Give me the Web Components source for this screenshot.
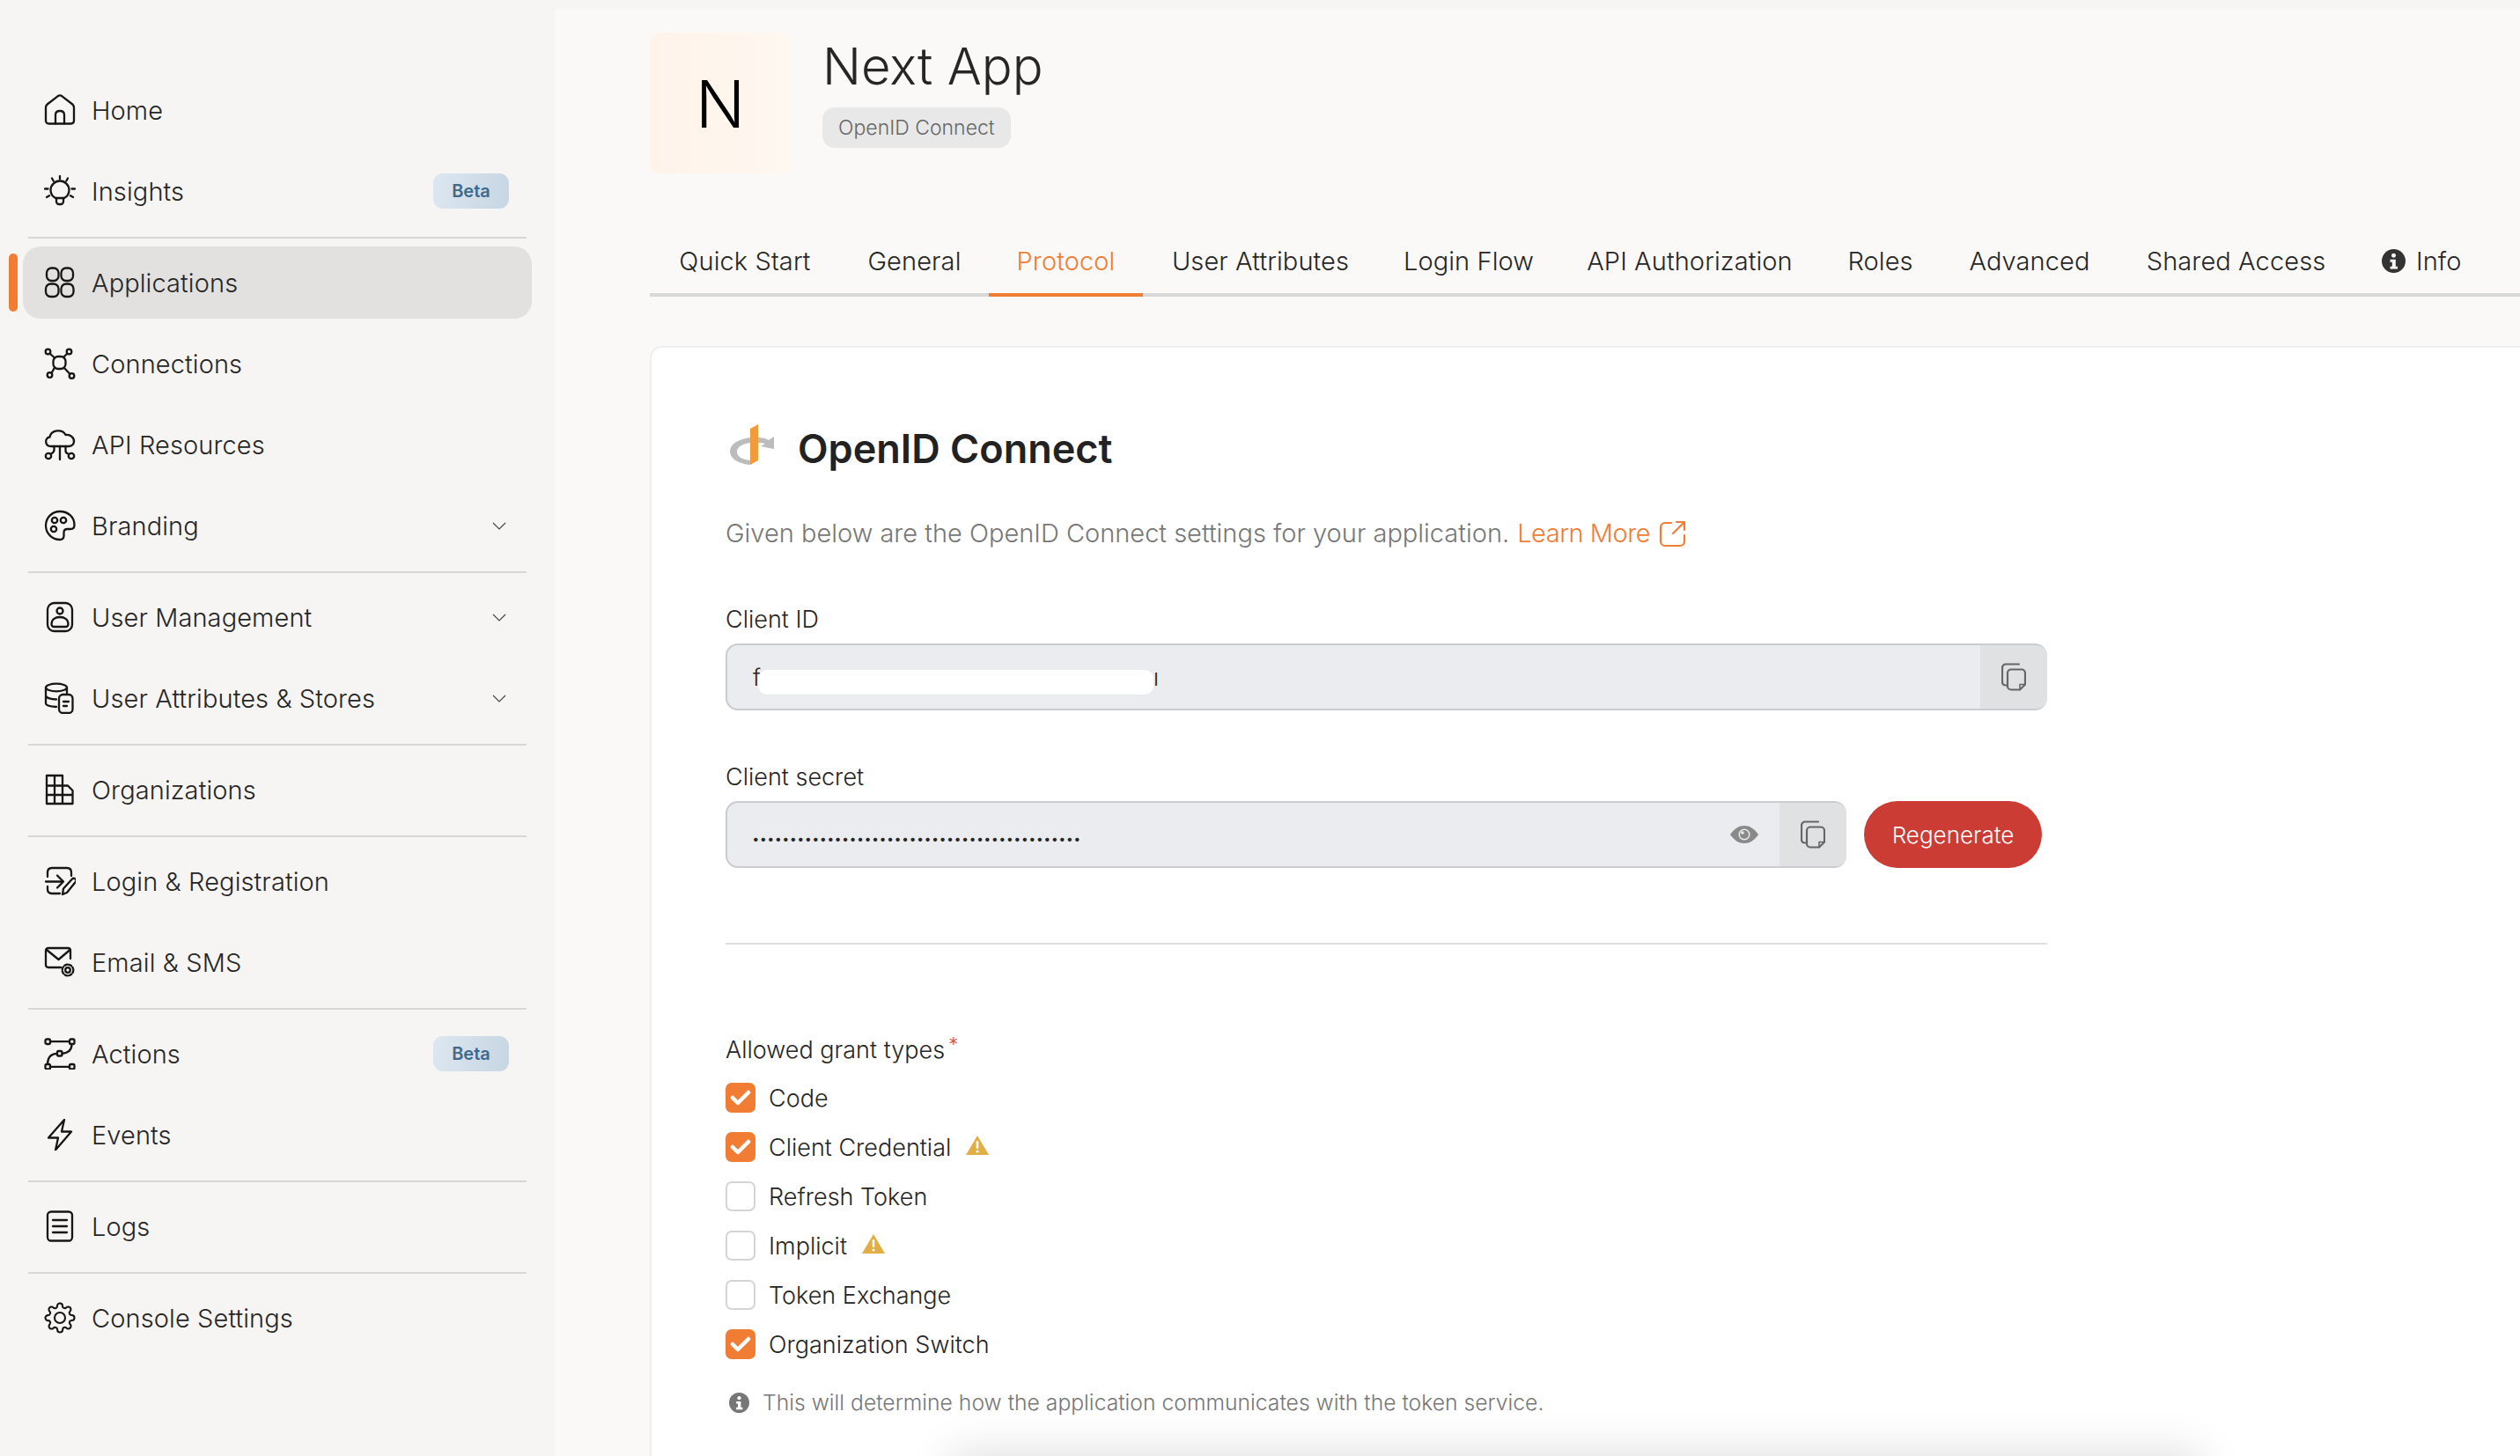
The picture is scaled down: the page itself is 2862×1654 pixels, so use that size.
<!DOCTYPE html>
<html lang="en">
<head>
<meta charset="utf-8">
<title>Next App - Protocol</title>
<style>
  html, body { margin: 0; height: 100%; overflow: hidden; }
  body {
    width: 2862px;
    height: 1654px;
    background: #f6f5f3;
    font-family: Inter, "Noto Sans", sans-serif;
    font-weight: 300;
    color: #262626;
    display: flex;
  }
</style>
</head>
<body>
  <app-sidebar>
    <nav-item icon="home">Home</nav-item>
    <nav-item icon="insights" badge="Beta">Insights</nav-item>
    <nav-rule></nav-rule>
    <nav-item icon="apps" active>Applications</nav-item>
    <nav-item icon="connections">Connections</nav-item>
    <nav-item icon="api">API Resources</nav-item>
    <nav-item icon="branding" chevron>Branding</nav-item>
    <nav-rule></nav-rule>
    <nav-item icon="users" chevron>User Management</nav-item>
    <nav-item icon="stores" chevron>User Attributes &amp; Stores</nav-item>
    <nav-rule></nav-rule>
    <nav-item icon="orgs">Organizations</nav-item>
    <nav-rule></nav-rule>
    <nav-item icon="login">Login &amp; Registration</nav-item>
    <nav-item icon="email">Email &amp; SMS</nav-item>
    <nav-rule></nav-rule>
    <nav-item icon="actions" badge="Beta">Actions</nav-item>
    <nav-item icon="events">Events</nav-item>
    <nav-rule></nav-rule>
    <nav-item icon="logs">Logs</nav-item>
    <nav-rule></nav-rule>
    <nav-item icon="settings">Console Settings</nav-item>
  </app-sidebar>

  <app-main>
    <app-header name="Next App" initial="N" kind="OpenID Connect"></app-header>
    <tab-bar>
      <tab-item width="216">Quick Start</tab-item>
      <tab-item width="169">General</tab-item>
      <tab-item width="175" active>Protocol</tab-item>
      <tab-item width="267">User Attributes</tab-item>
      <tab-item width="206">Login Flow</tab-item>
      <tab-item width="296">API Authorization</tab-item>
      <tab-item width="137">Roles</tab-item>
      <tab-item width="202">Advanced</tab-item>
      <tab-item width="267">Shared Access</tab-item>
      <tab-item info>Info</tab-item>
    </tab-bar>
    <protocol-card>
      <copy-field label="Client ID" redacted></copy-field>
      <copy-field label="Client secret" secret></copy-field>
      <grant-types></grant-types>
    </protocol-card>
  </app-main>
  <scroll-fade></scroll-fade>

<script>
// stroke icons, all drawn in a 36 box
const ICONS = {
  home: `<path d="M2 15c0-1.500.6-2.600 1.700-3.500L15.500 2.300c1.500-1.100 3.500-1.100 5 0l11.800 9.200c1.100.9 1.700 2 1.700 3.500v15c0 2-1.200 3.500-3.500 3.500h-25C3.200 33.500 2 32 2 30z"/><path d="M13 33.500V23.500c0-2.800 2-4.500 5-4.500s5 1.700 5 4.500v10"/>`,
  insights: `<path d="M13 26c-3.500-2-5.500-5-5.500-9a10.500 10.500 0 0 1 21 0c0 4-2 7-5.500 9z"/><path d="M14 26v4a3 3 0 0 0 3 3h2a3 3 0 0 0 3-3v-4"/><path d="M18 1v3.500M9 3.500l1.700 3M27 3.500l-1.700 3M1 15.500h3.500M31.500 15.500H35M3 25l3-1.700M33 25l-3-1.700"/>`,
  apps: `<rect x="3" y="1.500" width="13.500" height="14.500" rx="5.500"/><rect x="19.500" y="1.500" width="13.500" height="14.500" rx="5.500"/><rect x="2" y="19.500" width="14.500" height="14.500" rx="5.500"/><rect x="19.500" y="19.500" width="14" height="14.500" rx="5.500"/>`,
  connections: `<circle cx="4.500" cy="4.500" r="2.800"/><circle cx="28.500" cy="4.500" r="2.800"/><circle cx="6.500" cy="31" r="2.800"/><circle cx="31.500" cy="32" r="2.800"/><rect x="10.500" y="10" width="14" height="14" rx="5.500"/><path d="M6.500 6.500l5.500 5M26.500 6.500l-4 4M8.500 29l3.500-6.500M29.500 30l-6.500-7"/>`,
  api: `<path d="M8 20c-7 0-8-9.500-1.500-10.500C8 1 21 0 24.500 7c6-.5 10 3.500 9.500 8-.4 3-3 5-6 5z"/><path d="M18 20v15M11.500 20v4c0 2.500-1.500 3.500-3.500 4.500M24.500 20v5c0 2 1 3 3 3.500"/><circle cx="5" cy="31" r="3.200"/><circle cx="31" cy="31" r="3.200"/>`,
  branding: `<path d="M18 2a16 16 0 1 0 0 32c3 0 4.500-2 4.500-4.500v-3.500c0-2.500 1.500-4 4-4h3.500c2.700 0 4.500-1.800 4.500-4.500C34.500 8 27 2 18 2z"/><circle cx="12" cy="12" r="3.200"/><circle cx="22" cy="12" r="3.200"/><circle cx="11" cy="22" r="3.200"/>`,
  users: `<rect x="4" y="2" width="28" height="32" rx="7.500"/><circle cx="18" cy="11" r="3.500"/><path d="M8.500 26c0-5 4-8 9.500-8s9.500 3 9.500 8c0 2-1.500 3-3 3H11.500c-1.500 0-3-1-3-3z"/>`,
  stores: `<ellipse cx="14" cy="6" rx="12" ry="4.300"/><path d="M2 6v18c0 2 2.500 3.500 12 4M2 15c0 2.500 5 4.500 12 4.500M26 6v6"/><rect x="17" y="14" width="15.500" height="21" rx="4.500"/><path d="M22 22h6M22 27h4"/>`,
  orgs: `<path d="M3 2h18v11.500h6l5.500 5.500v15H3zM3 13.500h18M3 24h29.500M12 2v32M21 13.500V34"/>`,
  login: `<path d="M4 13V8c0-3 2-5 5-5h17c3 0 5 2 5 5v4M4 24v3c0 3 2 5 5 5h9"/><path d="M2 18.500h20M15 11.500l7 7-7 7"/><path d="M21 33l1-6.500 10-11c1-1 2.600-1 3.500 0s1 2.700 0 3.700L26 31z"/>`,
  email: `<path d="M19 24H5c-2 0-3-1-3-3V5c0-2 1-3 3-3h22c2 0 3 1 3 3v9"/><path d="M3 4l13.500 11L29.500 4"/><circle cx="27" cy="27" r="2.800"/><circle cx="27" cy="27" r="6.300" stroke-dasharray="3 2"/>`,
  actions: `<rect x="1.500" y="1.500" width="5.500" height="5.500" rx="1.500"/><rect x="29" y="1.500" width="5.500" height="5.500" rx="1.500"/><rect x="15" y="15" width="5.500" height="5.500" rx="1.500"/><rect x="1.500" y="30" width="5.500" height="5.500" rx="1.500"/><rect x="29" y="30" width="5.500" height="5.500" rx="1.500"/><path d="M7 4.200h22M7 32.800h22M31.500 7c0 6-2.500 10-11 10.800M15 17.800C8 18 4 22 4 30"/>`,
  events: `<path d="M23 1L5 21.500h11L13 35.500l18-21H20z"/>`,
  logs: `<rect x="4" y="1.500" width="28" height="33" rx="4"/><path d="M10 11h16M10 18h16M10 25h16"/>`,
  settings: `<g transform="scale(1.500)" stroke-width="1.400"><circle cx="12" cy="12" r="4"/><path d="M19.400 15a1.650 1.650 0 0 0 .33 1.820l.06.06a2 2 0 0 1 0 2.830 2 2 0 0 1-2.830 0l-.06-.06a1.650 1.650 0 0 0-1.820-.33 1.650 1.650 0 0 0-1 1.510V21a2 2 0 0 1-2 2 2 2 0 0 1-2-2v-.09A1.650 1.650 0 0 0 9 19.400a1.650 1.650 0 0 0-1.820.33l-.06.06a2 2 0 0 1-2.830 0 2 2 0 0 1 0-2.830l.06-.06a1.650 1.650 0 0 0 .33-1.820 1.650 1.650 0 0 0-1.510-1H3a2 2 0 0 1-2-2 2 2 0 0 1 2-2h.09A1.650 1.650 0 0 0 4.600 9a1.650 1.650 0 0 0-.33-1.820l-.06-.06a2 2 0 0 1 0-2.830 2 2 0 0 1 2.830 0l.06.06a1.650 1.650 0 0 0 1.820.33H9a1.650 1.650 0 0 0 1-1.510V3a2 2 0 0 1 2-2 2 2 0 0 1 2 2v.09a1.650 1.650 0 0 0 1 1.510 1.650 1.650 0 0 0 1.820-.33l.06-.06a2 2 0 0 1 2.830 0 2 2 0 0 1 0 2.830l-.06.06a1.650 1.650 0 0 0-.33 1.820V9a1.650 1.650 0 0 0 1.510 1H21a2 2 0 0 1 2 2 2 2 0 0 1-2 2h-.09a1.650 1.650 0 0 0-1.510 1z"/></g>`,
};

const svgIcon = (name, size = 36) =>
  `<svg width="${size}" height="${size}" viewBox="0 0 36 36" fill="none" stroke="currentColor" stroke-width="2.300" stroke-linecap="round" stroke-linejoin="round">${ICONS[name]}</svg>`;

const INFO_ICON = (size, color) =>
  `<svg width="${size}" height="${size}" viewBox="0 0 24 24"><circle cx="12" cy="12" r="12" fill="${color}"/><circle cx="12" cy="6.500" r="2.200" fill="#fff"/><path d="M8.500 10.500h5.500v7h2v2.500H8.500v-2.500h2v-4.500h-2z" fill="#fff"/></svg>`;

const COPY_ICON = `<svg width="28" height="32" viewBox="0 0 28 32" fill="none" stroke="#666" stroke-width="2.200" stroke-linejoin="round" stroke-linecap="round"><path d="M20 1.500H5a4 4 0 0 0-4 4v17a4 4 0 0 0 4 3h2"/><path d="M11 7.500h12a4 4 0 0 1 4 4v13l-6 6h-10a4 4 0 0 1-4-4v-15a4 4 0 0 1 4-4z"/><path d="M27 24.500h-6v6" stroke-width="1.600"/></svg>`;

const WARN_ICON = `<svg width="26" height="22" viewBox="0 0 26 22"><path d="M13 0L26 22H0z" fill="#e2ad42"/><rect x="11.700" y="6" width="2.600" height="9" rx="1.200" fill="#fff"/><circle cx="13" cy="18" r="1.600" fill="#fff"/></svg>`;

class AppSidebar extends HTMLElement {
  connectedCallback() {
    this.attachShadow({ mode: "open" });
    this.shadowRoot.innerHTML = `
      <style>
        :host {
          display: flex;
          flex-direction: column;
          box-sizing: border-box;
          width: 630px;
          flex: none;
          height: 1654px;
          padding: 84px 26px 0;
          font-size: 29px;
          letter-spacing: 0.1px;
        }
      </style>
      <slot></slot>
    `;
  }
}

class NavItem extends HTMLElement {
  connectedCallback() {
    const active = this.hasAttribute("active");
    const badge = this.getAttribute("badge");
    const chevron = this.hasAttribute("chevron");
    this.attachShadow({ mode: "open" });
    this.shadowRoot.innerHTML = `
      <style>
        :host {
          display: flex;
          align-items: center;
          position: relative;
          height: 82px;
          flex: none;
          margin-bottom: 10px;
          padding: 0 26px 0 24px;
          border-radius: 20px;
          color: #262626;
          background: ${active ? "#e2e1df" : "transparent"};
        }
        .icon { display: flex; color: #161616; margin-right: 18px; }
        .label { flex: 1; white-space: nowrap; }
        .badge {
          display: flex;
          align-items: center;
          justify-content: center;
          width: 86px;
          height: 40px;
          border-radius: 11px;
          background: linear-gradient(100deg, #dde7f0, #c6d6e3);
          color: #3e6a8e;
          font-size: 20px;
          font-weight: 600;
          letter-spacing: 0;
        }
        .chevron { display: flex; margin-right: 3px; }
        .marker {
          position: absolute;
          left: -16px;
          top: 8px;
          width: 10px;
          height: 66px;
          border-radius: 5px;
          background: #f17c33;
        }
      </style>
      ${active ? '<span class="marker"></span>' : ""}
      <span class="icon">${svgIcon(this.getAttribute("icon"))}</span>
      <span class="label"><slot></slot></span>
      ${badge ? `<span class="badge">${badge}</span>` : ""}
      ${chevron ? `<span class="chevron"><svg width="16" height="9" viewBox="0 0 16 9" fill="none" stroke="#444" stroke-width="1.200"><path d="M1 1l7 7 7-7"/></svg></span>` : ""}
    `;
  }
}

class NavRule extends HTMLElement {
  connectedCallback() {
    this.attachShadow({ mode: "open" });
    this.shadowRoot.innerHTML = `
      <style>
        :host {
          display: block;
          flex: none;
          height: 2px;
          margin: 1px 6px 9px;
          background: #d8d7d5;
        }
      </style>
    `;
  }
}

class AppMain extends HTMLElement {
  connectedCallback() {
    this.attachShadow({ mode: "open" });
    this.shadowRoot.innerHTML = `
      <style>
        :host {
          display: flex;
          flex-direction: column;
          flex: 1;
          box-sizing: border-box;
          height: 1644px;
          margin-top: 10px;
          padding: 27px 0 0 108px;
          background: #faf9f7;
          min-width: 0;
        }
      </style>
      <slot></slot>
    `;
  }
}

class AppHeader extends HTMLElement {
  connectedCallback() {
    this.attachShadow({ mode: "open" });
    this.shadowRoot.innerHTML = `
      <style>
        :host { display: flex; gap: 36px; height: 160px; flex: none; }
        .logo {
          display: flex;
          align-items: center;
          justify-content: center;
          box-sizing: border-box;
          width: 160px;
          height: 160px;
          padding-top: 2px;
          border-radius: 10px;
          background: linear-gradient(90deg, #fff3ea, #fef8f0);
          color: #000;
          font-size: 74px;
          font-weight: 300;
        }
        .name {
          font-size: 58px;
          line-height: 76px;
          color: #262626;
        }
        .kind {
          display: inline-block;
          margin-top: 9px;
          height: 46px;
          line-height: 46px;
          padding: 0 18px;
          border-radius: 14px;
          background: #e8e8e8;
          color: #666;
          font-size: 23px;
        }
      </style>
      <div class="logo">${this.getAttribute("initial")}</div>
      <div>
        <div class="name">${this.getAttribute("name")}</div>
        <div class="kind">${this.getAttribute("kind")}</div>
      </div>
    `;
  }
}

class TabBar extends HTMLElement {
  connectedCallback() {
    this.attachShadow({ mode: "open" });
    this.shadowRoot.innerHTML = `
      <style>
        :host {
          display: flex;
          flex: none;
          margin-top: 69px;
          height: 67px;
          border-bottom: 4px solid #d8d8d8;
          font-size: 29px;
          letter-spacing: 0.1px;
        }
      </style>
      <slot></slot>
    `;
  }
}

class TabItem extends HTMLElement {
  connectedCallback() {
    const active = this.hasAttribute("active");
    const width = this.getAttribute("width");
    this.attachShadow({ mode: "open" });
    this.shadowRoot.innerHTML = `
      <style>
        :host {
          display: flex;
          align-items: center;
          justify-content: center;
          gap: 12px;
          box-sizing: border-box;
          flex: none;
          height: 71px;
          ${width ? `width: ${width}px;` : "padding: 0 32px;"}
          padding-bottom: 7px;
          white-space: nowrap;
          color: ${active ? "#f17c33" : "#262626"};
          border-bottom: 4px solid ${active ? "#f17c33" : "transparent"};
        }
      </style>
      ${this.hasAttribute("info") ? INFO_ICON(27, "#333") : ""}
      <slot></slot>
    `;
  }
}

class ProtocolCard extends HTMLElement {
  connectedCallback() {
    this.attachShadow({ mode: "open" });
    this.shadowRoot.innerHTML = `
      <style>
        :host {
          display: block;
          flex: 1;
          box-sizing: border-box;
          margin-top: 56px;
          padding: 87px 0 0 84px;
          background: #fff;
          border: 2px solid #eeeff1;
          border-right: 0;
          border-bottom: 0;
          border-radius: 14px 0 0 0;
          overflow: hidden;
        }
        .title { display: flex; gap: 26px; height: 56px; padding-left: 5px; }
        .title svg { flex: none; }
        h2 {
          margin: 0;
          font-size: 45px;
          line-height: 56px;
          font-weight: 600;
          color: #222;
        }
        p {
          margin: 48px 0 0;
          font-size: 29px;
          line-height: 40px;
          color: #777;
          display: flex;
          align-items: center;
          white-space: nowrap;
        }
        a {
          color: #f17c33;
          text-decoration: none;
          display: inline-flex;
          align-items: center;
          gap: 10px;
          margin-left: 9px;
          letter-spacing: -0.45px;
        }
      </style>
      <div class="title">
        <svg width="51" height="46" viewBox="0 0 51 46">
          <path d="M23 15C10 17 0 22 0 31C0 39 10 45 23 46V41C14 40 8 37 8 31C8 26 14 22 23 21z" fill="#bcbcbc"/>
          <path d="M32 15C37 15 41 16 44 18L50 14V28L35 25L40 22C37 21 35 21 32 21z" fill="#bcbcbc"/>
          <path d="M23 5L32 0V41L23 46z" fill="#f29a3c"/>
        </svg>
        <h2>OpenID Connect</h2>
      </div>
      <p>Given below are the OpenID Connect settings for your application.
        <a>Learn More
          <svg width="31" height="31" viewBox="0 0 31 31" fill="none" stroke="#f17c33" stroke-width="2.200" stroke-linecap="round" stroke-linejoin="round"><path d="M14 3H7a5 5 0 0 0-5 5v16a5 5 0 0 0 5 5h17a5 5 0 0 0 5-5v-7"/><path d="M16 15L29 2M20 2h9v9"/></svg>
        </a>
      </p>
      <slot></slot>
    `;
  }
}

class CopyField extends HTMLElement {
  connectedCallback() {
    const secret = this.hasAttribute("secret");
    this.attachShadow({ mode: "open" });
    this.shadowRoot.innerHTML = `
      <style>
        :host { display: block; width: 1501px; margin-top: 60px; }
        :host([secret]) { margin-top: 58px; }
        label { display: block; font-size: 27px; line-height: 36px; color: #262626; }
        .row { display: flex; gap: 20px; margin-top: 9px; }
        .box {
          flex: 1;
          display: flex;
          height: 76px;
          box-sizing: border-box;
          border-radius: 14px;
          overflow: hidden;
          border: 2px solid #cbccd0;
          border-right: 0;
          background: #ebecf0;
        }
        .value {
          flex: 1;
          display: flex;
          align-items: center;
          padding-left: 29px;
          font-size: 26px;
          color: #262626;
          min-width: 0;
        }
        .first { width: 6px; }
        .redact {
          display: block;
          width: 449px;
          height: 28px;
          margin: 12px 0 0;
          background: #fff;
          border-radius: 10px;
        }
        .dots { font-size: 14px; letter-spacing: 1.85px; font-weight: 700; margin-top: 8px; }
        .eye { display: flex; margin-right: 24px; align-self: center; }
        .copy {
          display: flex;
          align-items: center;
          justify-content: center;
          width: 76px;
          margin: -2px 0;
          background: #e0e1e3;
        }
        button {
          flex: none;
          width: 202px;
          height: 76px;
          margin-right: 6px;
          border: 0;
          border-radius: 38px;
          background: #cb3c34;
          color: #fff;
          font: inherit;
          font-size: 26px;
          padding-top: 2px;
        }
      </style>
      <label>${this.getAttribute("label")}</label>
      <div class="row">
        <div class="box">
          <div class="value">
            ${secret
              ? `<span class="dots">${"•".repeat(44)}</span>`
              : `<span class="first">f</span><span class="redact"></span><span>ı</span>`}
          </div>
          ${secret ? `<span class="eye"><svg width="32" height="20" viewBox="0 0 32 20"><path d="M0 10C5 3 10 0 16 0s11 3 16 10c-5 7-10 10-16 10S5 17 0 10z" fill="#8a8a8a"/><circle cx="16" cy="10" r="6.500" fill="#ebecf0"/><circle cx="16" cy="10" r="5" fill="#8a8a8a"/><circle cx="14" cy="8" r="1.800" fill="#ebecf0"/></svg></span>` : ""}
          <div class="copy">${COPY_ICON}</div>
        </div>
        ${secret ? "<button>Regenerate</button>" : ""}
      </div>
    `;
  }
}

class GrantTypes extends HTMLElement {
  connectedCallback() {
    this.attachShadow({ mode: "open" });
    const rows = [
      ["Code", true, false],
      ["Client Credential", true, true],
      ["Refresh Token", false, false],
      ["Implicit", false, true],
      ["Token Exchange", false, false],
      ["Organization Switch", true, false],
    ];
    this.shadowRoot.innerHTML = `
      <style>
        :host { display: block; width: 1501px; margin-top: 85px; }
        hr { border: 0; height: 2px; margin: 0; background: #dedede; }
        .legend { margin-top: 102px; font-size: 27px; line-height: 36px; color: #262626; }
        .legend sup {
          color: #e0483e;
          font-size: 22px;
          line-height: 0;
          vertical-align: 8px;
          margin-left: 4px;
        }
        ul {
          list-style: none;
          margin: 19px 0 0;
          padding: 0;
          display: flex;
          flex-direction: column;
          gap: 22px;
        }
        li { display: flex; align-items: center; height: 34px; font-size: 27px; color: #262626; }
        .box {
          display: flex;
          align-items: center;
          justify-content: center;
          box-sizing: border-box;
          width: 34px;
          height: 34px;
          margin-right: 15px;
          border-radius: 7px;
          border: 2px solid #d5d5d5;
        }
        .box.on { background: #f17c33; border-color: #f17c33; }
        .warn { display: flex; margin: -4px 0 0 17px; }
        .hint {
          display: flex;
          align-items: center;
          gap: 15px;
          margin: 31px 0 0 4px;
          font-size: 24.7px;
          line-height: 36px;
          color: #777;
        }
      </style>
      <hr>
      <div class="legend">Allowed grant types<sup>*</sup></div>
      <ul>
        ${rows.map(([text, on, warn]) => `
          <li>
            <span class="box ${on ? "on" : ""}">${on ? '<svg width="24" height="20" viewBox="0 0 24 20" fill="none" stroke="#fff" stroke-width="4.500" stroke-linecap="round" stroke-linejoin="round"><path d="M3 10l6 6L21 4"/></svg>' : ""}</span>
            <span>${text}</span>
            ${warn ? `<span class="warn">${WARN_ICON}</span>` : ""}
          </li>`).join("")}
      </ul>
      <div class="hint">${INFO_ICON(23, "#777")}<span>This will determine how the application communicates with the token service.</span></div>
    `;
  }
}

// soft shadow of a floating bar, mostly off the bottom of the window
class ScrollFade extends HTMLElement {
  connectedCallback() {
    this.attachShadow({ mode: "open" });
    this.shadowRoot.innerHTML = `
      <style>
        :host {
          position: fixed;
          left: 1120px;
          top: 1690px;
          width: 1340px;
          height: 40px;
          background: #ddd;
          box-shadow: 0 0 50px 40px rgba(0, 0, 0, 0.13);
          pointer-events: none;
        }
      </style>
    `;
  }
}

customElements.define("app-sidebar", AppSidebar);
customElements.define("nav-item", NavItem);
customElements.define("nav-rule", NavRule);
customElements.define("app-main", AppMain);
customElements.define("app-header", AppHeader);
customElements.define("tab-bar", TabBar);
customElements.define("tab-item", TabItem);
customElements.define("protocol-card", ProtocolCard);
customElements.define("copy-field", CopyField);
customElements.define("grant-types", GrantTypes);
customElements.define("scroll-fade", ScrollFade);
</script>
</body>
</html>
